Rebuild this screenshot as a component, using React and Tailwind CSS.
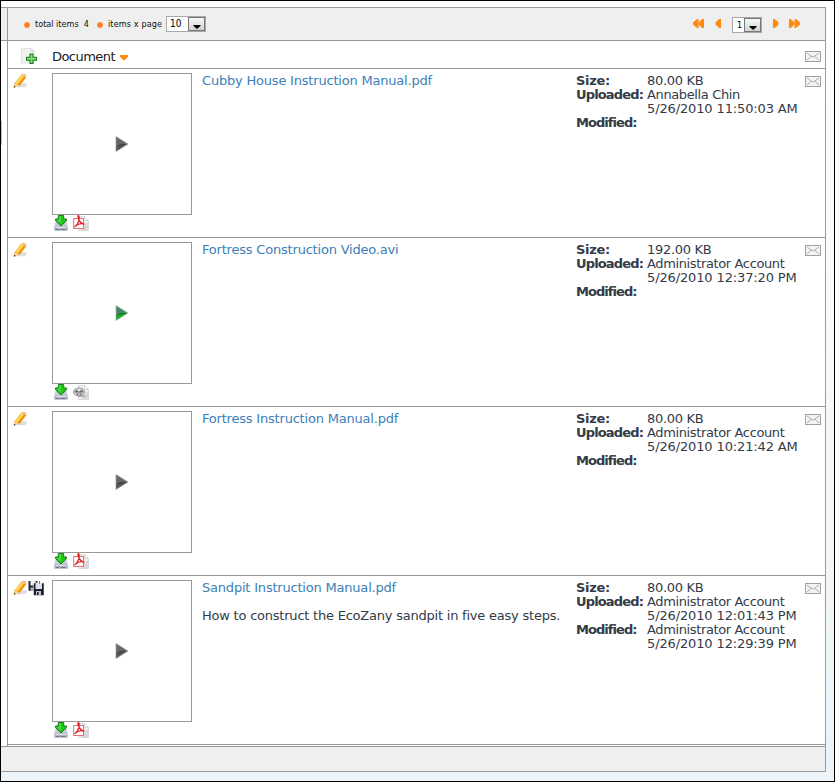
import React from 'react';

const rows = [
  { name: 'Cubby House Instruction Manual.pdf', size: '80.00 KB', by: 'Annabella Chin', at: '5/26/2010 11:50:03 AM' },
  { name: 'Fortress Construction Video.avi', size: '192.00 KB', by: 'Administrator Account', at: '5/26/2010 12:37:20 PM', video: true },
  { name: 'Fortress Instruction Manual.pdf', size: '80.00 KB', by: 'Administrator Account', at: '5/26/2010 10:21:42 AM' },
  {
    name: 'Sandpit Instruction Manual.pdf',
    note: 'How to construct the EcoZany sandpit in five easy steps.',
    size: '80.00 KB',
    by: 'Administrator Account',
    at: '5/26/2010 12:01:43 PM',
    modBy: 'Administrator Account',
    modAt: '5/26/2010 12:29:39 PM',
    locked: true,
  },
];

function Envelope() {
  return (
    <svg className="block" width="16" height="11" viewBox="0 0 16 11">
      <rect x=".5" y=".5" width="15" height="10" fill="#f4f4f4" stroke="#a0a0a0" />
      <path d="M2 2l5 3.600q1 .6 2 0L14 2M2 9l4-3.500M14 9l-4-3.500" fill="none" stroke="#acacac" />
    </svg>
  );
}

function Pencil() {
  return (
    <svg className="block" width="16" height="16" viewBox="0 0 16 16">
      <path d="M5 14.300l4-4 5.500 0 0 3-2 1z" fill="#dedede" />
      <path d="M2.500 10.500L9 2l5 2.300L7.500 12.800 2 14.500z" fill="#f9a61c" />
      <path d="M3.300 10.300L9.500 2.200l2.200 1L5.500 11.300z" fill="#ffd75e" />
      <path d="M7.500 12.800l6.600-8.600-1.300-.7-6.500 8.600z" fill="#ee8d0c" />
      <path d="M9 2Q11-.3 13.800 1.400q1 1.200.3 2.900z" fill="#f8bd80" />
      <path d="M2.500 10.500l1.500.4 1.200 1.200 2.300.7-5.300 1.700z" fill="#f5d7a8" />
      <path d="M1.600 14.700l.5-2.100 1.900 1.400z" fill="#6b4a2a" />
    </svg>
  );
}

function Floppies() {
  return (
    <svg className="block" width="17" height="16" viewBox="0 0 17 16">
      <path d="M.5 1h9v10h-8l-1-1z" fill="#23262f" />
      <path d="M2.500 1h5v4.500h-5z" fill="#eef1f5" />
      <path d="M2.500 7.500h3v3.500h-3z" fill="#aeb4bc" />
      <path d="M5.500 3h10.500v12.500H6.500l-1-1z" fill="#1b1e27" stroke="#fff" strokeWidth=".5" />
      <path d="M7.500 3h6.500v6H7.500z" fill="#dce3ec" />
      <path d="M8 11h5v4H8z" fill="#bfc4cb" />
      <path d="M9 12h1.500v3H9z" fill="#1b1e27" />
      <path d="M11 1h1v3h-1z" fill="#777d85" />
    </svg>
  );
}

function Download() {
  return (
    <svg className="block" width="14" height="16" viewBox="0 0 14 16">
      <path d="M2.200 3.500h9.600l1.700 8v4H.5v-4z" fill="#c3c9d6" />
      <path d="M.5 11.500h13v4H.5z" fill="#9da4b2" />
      <path d="M1.200 11.800h11.600v1.400H1.200z" fill="#dde2eb" />
      <path d="M2 14h3v1H2zM7 14h4v1H7z" fill="#737b8b" />
      <path d="M4.300.5h5.400V4h2.800v1.500L7 11 1.500 5.500V4h2.800z" fill="#1fc818" stroke="#1f7a24" strokeWidth="1" />
      <path d="M5 1.100h1.800v7.500L3 4.900h2z" fill="#4bdd3d" />
    </svg>
  );
}

function PageBack() {
  return (
    <>
      <path d="M5.500 1.500h6l4 4v10h-10z" fill="#f0f0f0" stroke="#dcdcdc" />
      <path d="M11.500 1.500v4h4z" fill="#fff" stroke="#c8c8c8" strokeWidth=".7" />
      <path d="M13.500 8h2v7.500H8z" fill="#d8d8d8" />
    </>
  );
}

function Pdf() {
  return (
    <svg className="block" width="17" height="16" viewBox="0 0 17 16">
      <PageBack />
      <rect x=".7" y="3.500" width="9.800" height="10" fill="#fff" stroke="#e97070" />
      <path d="M1.500 12C4.500 9.500 6.500 5 6 1.300 5.800.3 4.700.5 5 1.800c.5 3.500 3 6.500 6.500 7.600M2.300 11.300c2.500-2.300 5.500-3.200 9-2.200" fill="none" stroke="#df1f23" strokeWidth="1.300" />
    </svg>
  );
}

function Film() {
  return (
    <svg className="block" width="17" height="16" viewBox="0 0 17 16">
      <PageBack />
      <ellipse cx="6" cy="8" rx="5.500" ry="4" fill="#d0d0d0" stroke="#8e8e8e" />
      <path d="M6 12.200h6.500" stroke="#999" />
      <circle cx="3.500" cy="7.500" r="1.300" fill="#5a5a5a" />
      <circle cx="8.500" cy="7.500" r="1.300" fill="#5a5a5a" />
      <circle cx="6" cy="5.700" r="1" fill="#f4f4f4" />
      <circle cx="6" cy="8" r=".7" fill="#444" />
      <circle cx="4.600" cy="10.100" r=".9" fill="#666" />
      <circle cx="7.500" cy="10.100" r=".9" fill="#666" />
    </svg>
  );
}

function Play({ green }) {
  return (
    <svg className="block" width="14" height="16" viewBox="0 0 14 16">
      <path d="M1 .5L13 8 1 15.500z" fill={green ? '#438767' : '#666'} stroke={green ? '#a3bfae' : '#a0a0a0'} strokeWidth=".8" />
      <path d="M1.500 10Q5 7.500 12 8L1.500 14.600z" fill={green ? '#17ad14' : '#555'} />
      <path d="M1.500 10.500Q5 7.600 11.500 8.100L5 9.700z" fill={green ? '#0e6a1d' : '#3a3a3a'} />
    </svg>
  );
}

function AddPage() {
  return (
    <svg className="block" width="16" height="16" viewBox="0 0 16 16">
      <path d="M.5.500h9.500l3 3v11.500H.5z" fill="#f1f1f1" stroke="#e0e0e0" />
      <path d="M10 .5v3h3z" fill="#fff" stroke="#ccc" strokeWidth=".7" />
      <path d="M9 6h3v3.300h3.500v3H12v3.200H9v-3.200H5.500v-3H9z" fill="#7fe070" stroke="#20782a" strokeWidth="1.100" />
    </svg>
  );
}

function Dot() {
  return <span className="block size-[6px] rounded-full bg-[radial-gradient(circle,#ff7a1c_35%,#ffb27a_100%)]" />;
}

function Arrow({ kind }) {
  const double = kind === 'first' || kind === 'last';
  const flip = kind === 'first' || kind === 'prev';
  return (
    <svg className={flip ? 'block -scale-x-100' : 'block'} width={double ? 11 : 6} height="9" viewBox={double ? '0 0 11 9' : '0 0 6 9'}>
      <path d="M0 0h1.800L5.500 3.500v2L1.800 9H0z" fill="#ff8a0c" />
      {double && <path d="M5.500 0h1.500l4 3.500v2L7 9H5.500z" fill="#ff8a0c" />}
    </svg>
  );
}

function Select({ value, wide }) {
  return (
    <div className={`flex h-[16px] border border-[#a9a9a9] bg-white text-black ${wide ? 'w-[40px] text-[10px]' : 'w-[30px] text-[9px]'}`}>
      <span className={`flex-1 font-['DejaVu_Sans_Condensed','DejaVu_Sans',sans-serif] leading-[14px] ${wide ? 'pl-[3px]' : 'pl-[4px]'}`}>{value}</span>
      <span className="flex h-[14px] w-[17px] items-end justify-center border border-[#777] bg-gradient-to-b from-[#f8f8f8] to-[#d2d2d2] pb-px">
        <svg width="8" height="4" viewBox="0 0 8 4"><path d="M.5 0h7v1L4 4 .5 1z" fill="#000" /></svg>
      </span>
    </div>
  );
}

function Row({ item }) {
  return (
    <div className="flex h-[169px] border-b border-[#999] pl-[4px] leading-[14px]">
      <div className="flex w-[40px] shrink-0 pt-[4px]">
        <Pencil />
        {item.locked && <Floppies />}
      </div>
      <div className="w-[140px] shrink-0 pt-[4px]">
        <div className="flex h-[142px] items-center border border-[#999] pl-[62px]">
          <Play green={item.video} />
        </div>
        <div className="flex gap-[5px] pl-[2px]">
          <Download />
          {item.video ? <Film /> : <Pdf />}
        </div>
      </div>
      <div className="w-[384px] shrink-0 pl-[10px] pt-[5px] tracking-[-0.2px]">
        <a className="block text-[#3c80b8]">{item.name}</a>
        {item.note && <p className="whitespace-nowrap pt-[14px] tracking-[-0.22px]">{item.note}</p>}
      </div>
      <dl className="grid h-[75px] w-[229px] shrink-0 auto-rows-[14px] grid-cols-[71px_1fr] whitespace-nowrap pt-[5px]">
        <dt className="font-bold tracking-[-0.3px]">Size:</dt>
        <dd className="tracking-[-0.3px]">{item.size}</dd>
        <dt className="font-bold tracking-[-0.85px]">Uploaded:</dt>
        <dd className="tracking-[-0.37px]">{item.by}</dd>
        <dd className="col-start-2 tracking-[-0.13px]">{item.at}</dd>
        <dt className="font-bold tracking-[-0.95px]">Modified:</dt>
        <dd className="tracking-[-0.37px]">{item.modBy}</dd>
        {item.modAt && <dd className="col-start-2 tracking-[-0.13px]">{item.modAt}</dd>}
      </dl>
      <div className="pt-[7px]"><Envelope /></div>
    </div>
  );
}

export default function App() {
  return (
    <div className="flex h-[782px] w-[835px] overflow-hidden border border-black bg-[#edf3f7] font-['DejaVu_Sans',Verdana,sans-serif] text-[13px] text-[#333b47]">
      <div className="w-[825px] shrink-0">
        <div className="h-[6px] bg-white" />
        <div className="flex h-[739px] border-r border-t border-[#999] bg-white">
          <div className="w-[6px] shrink-0">
            <div className="h-[33px] border-b border-[#999] bg-[#efefef]" />
            <div className="mt-[80px] h-[24px] w-px bg-[#e8cf20]" />
          </div>
          <div className="w-[818px] shrink-0 border-l border-[#999]">
            <div className="flex h-[33px] items-center border-b border-[#999] bg-[#efefef] pl-[16px] text-[9px] text-[#111]">
              <div className="flex items-center pt-px font-['DejaVu_Sans_Condensed','DejaVu_Sans',sans-serif]">
                <Dot />
                <span className="w-[53px] whitespace-pre pl-[5px]">total items  4</span>
                <span className="pl-[14px]"><Dot /></span>
                <span className="w-[63px] whitespace-nowrap pl-[5px] tracking-[0.12px]">items x page</span>
              </div>
              <Select value="10" wide />
              <div className="ml-auto flex items-center pr-[25px]">
                <span className="pb-px"><Arrow kind="first" /></span>
                <span className="pb-px pl-[11px]"><Arrow kind="prev" /></span>
                <span className="pl-[11px] pt-px"><Select value="1" /></span>
                <span className="pb-px pl-[11px]"><Arrow kind="next" /></span>
                <span className="pb-px pl-[10px]"><Arrow kind="last" /></span>
              </div>
            </div>
            <div className="flex h-[28px] items-center border-b border-[#999] pl-[13px] text-[#222]">
              <span className="pt-[2px]"><AddPage /></span>
              <span className="pl-[15px] pt-[4px] tracking-[-0.55px]">Document</span>
              <svg className="ml-[5px] mt-[5px]" width="8" height="5" viewBox="0 0 8 5"><path d="M0 0h8v1.500L5 5H3L0 1.500z" fill="#ff8a0c" /></svg>
              <span className="ml-auto pr-[4px] pt-[4px]"><Envelope /></span>
            </div>
            {rows.map((item) => <Row key={item.name} item={item} />)}
          </div>
        </div>
        <div className="h-[26px] border-y border-r border-[#999] bg-[#efefef]" />
      </div>
      <div className="flex-1 bg-gradient-to-b from-white to-[#edf3f7]" />
    </div>
  );
}
